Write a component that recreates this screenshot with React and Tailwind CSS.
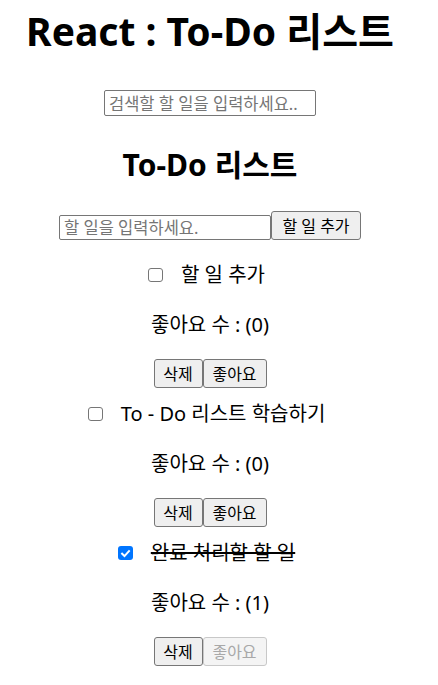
import React from "react";

const todos = [
  { text: "할 일 추가", done: false, likes: 0 },
  { text: "To - Do 리스트 학습하기", done: false, likes: 0 },
  { text: "완료 처리할 할 일", done: true, likes: 1 },
];

function Btn({ children, disabled, className = "" }) {
  return (
    <button
      disabled={disabled}
      className={
        "h-[29px] rounded-[3px] border text-[16px] leading-none flex items-center justify-center " +
        (disabled
          ? "border-[#c8c8c8] bg-[#f4f4f4] text-[#a8a8a8] "
          : "border-[#767676] bg-[#efefef] text-black ") +
        className
      }
    >
      {children}
    </button>
  );
}

function Check({ checked }) {
  if (checked) {
    return (
      <span className="w-[15px] h-[14px] rounded-[3px] bg-[#0075ff] flex items-center justify-center">
        <svg width="11" height="11" viewBox="0 0 12 12">
          <path d="M2.3 6.2 L4.9 8.8 L9.8 3.4" fill="none" stroke="white" strokeWidth="2.2" strokeLinecap="square" />
        </svg>
      </span>
    );
  }
  return <span className="w-[15px] h-[14px] rounded-[3px] border border-[#767676] bg-white" />;
}

function Item({ todo, first }) {
  return (
    <div className={"flex flex-col items-center " + (first ? "mt-[21px]" : "mt-[12px]")}>
      <div className="h-[28px] flex items-center justify-center gap-[18px] pr-[7px]">
        <Check checked={todo.done} />
        <span className={"text-[20px] leading-[28px] whitespace-nowrap " + (todo.done ? "line-through" : "")}>
          {todo.text}
        </span>
      </div>
      <p className="mt-[22px] h-[28px] text-[20px] leading-[28px]">
        좋아요 수 : ({todo.likes})
      </p>
      <div className="mt-[20px] flex">
        <Btn className="w-[49px]">삭제</Btn>
        <Btn className="w-[64px]" disabled={todo.done}>
          좋아요
        </Btn>
      </div>
    </div>
  );
}

export default function App() {
  return (
    <div className="w-[420px] flex flex-col items-center text-black bg-white font-['Noto_Sans','Noto_Sans_CJK_KR',sans-serif]">
      <h1 className="mt-[7px] h-[48px] text-[39px] leading-[48px] font-bold whitespace-nowrap">
        React : To-Do 리스트
      </h1>
      <input
        placeholder="검색할 할 일을 입력하세요.."
        className="mt-[35px] w-[212px] h-[26px] border border-[#767676] rounded-[2px] px-[4px] text-[16.5px] placeholder:text-[#757575] outline-none"
      />
      <h2 className="mt-[31px] h-[36px] text-[30px] leading-[36px] font-bold">To-Do 리스트</h2>
      <div className="mt-[28px] flex items-end">
        <input
          placeholder="할 일을 입력하세요."
          className="w-[212px] h-[25px] border border-[#767676] rounded-[2px] px-[4px] text-[16.5px] placeholder:text-[#757575] outline-none"
        />
        <Btn className="w-[90px]">할 일 추가</Btn>
      </div>
      {todos.map((t, i) => (
        <Item key={i} todo={t} first={i === 0} />
      ))}
      <div className="h-[18px]" />
    </div>
  );
}
